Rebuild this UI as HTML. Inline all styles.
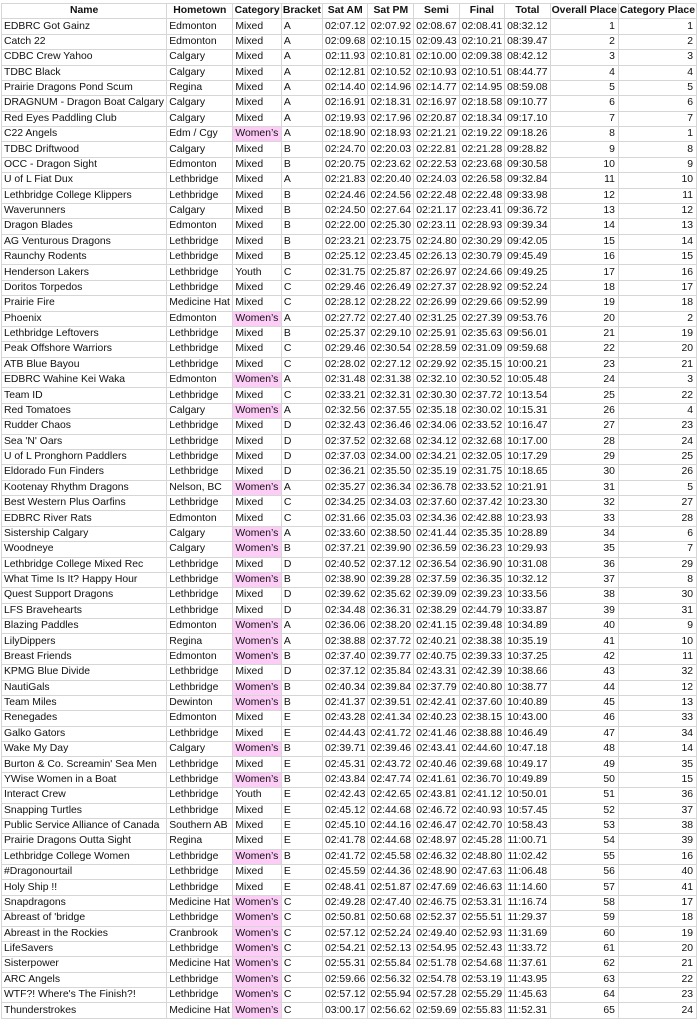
<!DOCTYPE html>
<html><head><meta charset="utf-8"><style>
body{margin:0;background:#fff;width:697px;height:1023px;overflow:hidden;position:relative;font-family:"Liberation Sans",sans-serif;}
table{position:absolute;left:1px;top:3px;border-collapse:collapse;table-layout:fixed;font-size:10.4px;color:#111;}
td{border:1px solid #d6d6d6;padding:0 2px;height:14.38px;line-height:14px;white-space:nowrap;overflow:hidden;}
tr{height:15.38px}
td:nth-child(n+5){text-align:center}
td:nth-child(n+10){text-align:right;padding-right:3px}
tr.h td{font-weight:bold;text-align:center;padding:0 1px}
td.w{background:#fdcdf8}
</style></head><body>
<table>
<colgroup><col style="width:167px"><col style="width:69px"><col style="width:51px"><col style="width:40px"><col style="width:45px"><col style="width:48px"><col style="width:42px"><col style="width:42px"><col style="width:42px"><col style="width:68px"><col style="width:78px"></colgroup>
<tr class="h"><td>Name</td><td>Hometown</td><td>Category</td><td>Bracket</td><td>Sat AM</td><td>Sat PM</td><td>Semi</td><td>Final</td><td>Total</td><td>Overall Place</td><td>Category Place</td></tr>
<tr><td>EDBRC Got Gainz</td><td>Edmonton</td><td>Mixed</td><td>A</td><td>02:07.12</td><td>02:07.92</td><td>02:08.67</td><td>02:08.41</td><td>08:32.12</td><td>1</td><td>1</td></tr>
<tr><td>Catch 22</td><td>Edmonton</td><td>Mixed</td><td>A</td><td>02:09.68</td><td>02:10.15</td><td>02:09.43</td><td>02:10.21</td><td>08:39.47</td><td>2</td><td>2</td></tr>
<tr><td>CDBC Crew Yahoo</td><td>Calgary</td><td>Mixed</td><td>A</td><td>02:11.93</td><td>02:10.81</td><td>02:10.00</td><td>02:09.38</td><td>08:42.12</td><td>3</td><td>3</td></tr>
<tr><td>TDBC Black</td><td>Calgary</td><td>Mixed</td><td>A</td><td>02:12.81</td><td>02:10.52</td><td>02:10.93</td><td>02:10.51</td><td>08:44.77</td><td>4</td><td>4</td></tr>
<tr><td>Prairie Dragons Pond Scum</td><td>Regina</td><td>Mixed</td><td>A</td><td>02:14.40</td><td>02:14.96</td><td>02:14.77</td><td>02:14.95</td><td>08:59.08</td><td>5</td><td>5</td></tr>
<tr><td>DRAGNUM - Dragon Boat Calgary</td><td>Calgary</td><td>Mixed</td><td>A</td><td>02:16.91</td><td>02:18.31</td><td>02:16.97</td><td>02:18.58</td><td>09:10.77</td><td>6</td><td>6</td></tr>
<tr><td>Red Eyes Paddling Club</td><td>Calgary</td><td>Mixed</td><td>A</td><td>02:19.93</td><td>02:17.96</td><td>02:20.87</td><td>02:18.34</td><td>09:17.10</td><td>7</td><td>7</td></tr>
<tr><td>C22 Angels</td><td>Edm / Cgy</td><td class="w">Women’s</td><td>A</td><td>02:18.90</td><td>02:18.93</td><td>02:21.21</td><td>02:19.22</td><td>09:18.26</td><td>8</td><td>1</td></tr>
<tr><td>TDBC Driftwood</td><td>Calgary</td><td>Mixed</td><td>B</td><td>02:24.70</td><td>02:20.03</td><td>02:22.81</td><td>02:21.28</td><td>09:28.82</td><td>9</td><td>8</td></tr>
<tr><td>OCC - Dragon Sight</td><td>Edmonton</td><td>Mixed</td><td>B</td><td>02:20.75</td><td>02:23.62</td><td>02:22.53</td><td>02:23.68</td><td>09:30.58</td><td>10</td><td>9</td></tr>
<tr><td>U of L Fiat Dux</td><td>Lethbridge</td><td>Mixed</td><td>A</td><td>02:21.83</td><td>02:20.40</td><td>02:24.03</td><td>02:26.58</td><td>09:32.84</td><td>11</td><td>10</td></tr>
<tr><td>Lethbridge College Klippers</td><td>Lethbridge</td><td>Mixed</td><td>B</td><td>02:24.46</td><td>02:24.56</td><td>02:22.48</td><td>02:22.48</td><td>09:33.98</td><td>12</td><td>11</td></tr>
<tr><td>Waverunners</td><td>Calgary</td><td>Mixed</td><td>B</td><td>02:24.50</td><td>02:27.64</td><td>02:21.17</td><td>02:23.41</td><td>09:36.72</td><td>13</td><td>12</td></tr>
<tr><td>Dragon Blades</td><td>Edmonton</td><td>Mixed</td><td>B</td><td>02:22.00</td><td>02:25.30</td><td>02:23.11</td><td>02:28.93</td><td>09:39.34</td><td>14</td><td>13</td></tr>
<tr><td>AG Venturous Dragons</td><td>Lethbridge</td><td>Mixed</td><td>B</td><td>02:23.21</td><td>02:23.75</td><td>02:24.80</td><td>02:30.29</td><td>09:42.05</td><td>15</td><td>14</td></tr>
<tr><td>Raunchy Rodents</td><td>Lethbridge</td><td>Mixed</td><td>B</td><td>02:25.12</td><td>02:23.45</td><td>02:26.13</td><td>02:30.79</td><td>09:45.49</td><td>16</td><td>15</td></tr>
<tr><td>Henderson Lakers</td><td>Lethbridge</td><td>Youth</td><td>C</td><td>02:31.75</td><td>02:25.87</td><td>02:26.97</td><td>02:24.66</td><td>09:49.25</td><td>17</td><td>16</td></tr>
<tr><td>Doritos Torpedos</td><td>Lethbridge</td><td>Mixed</td><td>C</td><td>02:29.46</td><td>02:26.49</td><td>02:27.37</td><td>02:28.92</td><td>09:52.24</td><td>18</td><td>17</td></tr>
<tr><td>Prairie Fire</td><td>Medicine Hat</td><td>Mixed</td><td>C</td><td>02:28.12</td><td>02:28.22</td><td>02:26.99</td><td>02:29.66</td><td>09:52.99</td><td>19</td><td>18</td></tr>
<tr><td>Phoenix</td><td>Edmonton</td><td class="w">Women’s</td><td>A</td><td>02:27.72</td><td>02:27.40</td><td>02:31.25</td><td>02:27.39</td><td>09:53.76</td><td>20</td><td>2</td></tr>
<tr><td>Lethbridge Leftovers</td><td>Lethbridge</td><td>Mixed</td><td>B</td><td>02:25.37</td><td>02:29.10</td><td>02:25.91</td><td>02:35.63</td><td>09:56.01</td><td>21</td><td>19</td></tr>
<tr><td>Peak Offshore Warriors</td><td>Lethbridge</td><td>Mixed</td><td>C</td><td>02:29.46</td><td>02:30.54</td><td>02:28.59</td><td>02:31.09</td><td>09:59.68</td><td>22</td><td>20</td></tr>
<tr><td>ATB Blue Bayou</td><td>Lethbridge</td><td>Mixed</td><td>C</td><td>02:28.02</td><td>02:27.12</td><td>02:29.92</td><td>02:35.15</td><td>10:00.21</td><td>23</td><td>21</td></tr>
<tr><td>EDBRC Wahine Kei Waka</td><td>Edmonton</td><td class="w">Women’s</td><td>A</td><td>02:31.48</td><td>02:31.38</td><td>02:32.10</td><td>02:30.52</td><td>10:05.48</td><td>24</td><td>3</td></tr>
<tr><td>Team ID</td><td>Lethbridge</td><td>Mixed</td><td>C</td><td>02:33.21</td><td>02:32.31</td><td>02:30.30</td><td>02:37.72</td><td>10:13.54</td><td>25</td><td>22</td></tr>
<tr><td>Red Tomatoes</td><td>Calgary</td><td class="w">Women’s</td><td>A</td><td>02:32.56</td><td>02:37.55</td><td>02:35.18</td><td>02:30.02</td><td>10:15.31</td><td>26</td><td>4</td></tr>
<tr><td>Rudder Chaos</td><td>Lethbridge</td><td>Mixed</td><td>D</td><td>02:32.43</td><td>02:36.46</td><td>02:34.06</td><td>02:33.52</td><td>10:16.47</td><td>27</td><td>23</td></tr>
<tr><td>Sea 'N' Oars</td><td>Lethbridge</td><td>Mixed</td><td>D</td><td>02:37.52</td><td>02:32.68</td><td>02:34.12</td><td>02:32.68</td><td>10:17.00</td><td>28</td><td>24</td></tr>
<tr><td>U of L Pronghorn Paddlers</td><td>Lethbridge</td><td>Mixed</td><td>D</td><td>02:37.03</td><td>02:34.00</td><td>02:34.21</td><td>02:32.05</td><td>10:17.29</td><td>29</td><td>25</td></tr>
<tr><td>Eldorado Fun Finders</td><td>Lethbridge</td><td>Mixed</td><td>D</td><td>02:36.21</td><td>02:35.50</td><td>02:35.19</td><td>02:31.75</td><td>10:18.65</td><td>30</td><td>26</td></tr>
<tr><td>Kootenay Rhythm Dragons</td><td>Nelson, BC</td><td class="w">Women’s</td><td>A</td><td>02:35.27</td><td>02:36.34</td><td>02:36.78</td><td>02:33.52</td><td>10:21.91</td><td>31</td><td>5</td></tr>
<tr><td>Best Western Plus Oarfins</td><td>Lethbridge</td><td>Mixed</td><td>C</td><td>02:34.25</td><td>02:34.03</td><td>02:37.60</td><td>02:37.42</td><td>10:23.30</td><td>32</td><td>27</td></tr>
<tr><td>EDBRC River Rats</td><td>Edmonton</td><td>Mixed</td><td>C</td><td>02:31.66</td><td>02:35.03</td><td>02:34.36</td><td>02:42.88</td><td>10:23.93</td><td>33</td><td>28</td></tr>
<tr><td>Sistership Calgary</td><td>Calgary</td><td class="w">Women’s</td><td>A</td><td>02:33.60</td><td>02:38.50</td><td>02:41.44</td><td>02:35.35</td><td>10:28.89</td><td>34</td><td>6</td></tr>
<tr><td>Woodneye</td><td>Calgary</td><td class="w">Women’s</td><td>B</td><td>02:37.21</td><td>02:39.90</td><td>02:36.59</td><td>02:36.23</td><td>10:29.93</td><td>35</td><td>7</td></tr>
<tr><td>Lethbridge College Mixed Rec</td><td>Lethbridge</td><td>Mixed</td><td>D</td><td>02:40.52</td><td>02:37.12</td><td>02:36.54</td><td>02:36.90</td><td>10:31.08</td><td>36</td><td>29</td></tr>
<tr><td>What Time Is It? Happy Hour</td><td>Lethbridge</td><td class="w">Women’s</td><td>B</td><td>02:38.90</td><td>02:39.28</td><td>02:37.59</td><td>02:36.35</td><td>10:32.12</td><td>37</td><td>8</td></tr>
<tr><td>Quest Support Dragons</td><td>Lethbridge</td><td>Mixed</td><td>D</td><td>02:39.62</td><td>02:35.62</td><td>02:39.09</td><td>02:39.23</td><td>10:33.56</td><td>38</td><td>30</td></tr>
<tr><td>LFS Bravehearts</td><td>Lethbridge</td><td>Mixed</td><td>D</td><td>02:34.48</td><td>02:36.31</td><td>02:38.29</td><td>02:44.79</td><td>10:33.87</td><td>39</td><td>31</td></tr>
<tr><td>Blazing Paddles</td><td>Edmonton</td><td class="w">Women’s</td><td>A</td><td>02:36.06</td><td>02:38.20</td><td>02:41.15</td><td>02:39.48</td><td>10:34.89</td><td>40</td><td>9</td></tr>
<tr><td>LilyDippers</td><td>Regina</td><td class="w">Women’s</td><td>A</td><td>02:38.88</td><td>02:37.72</td><td>02:40.21</td><td>02:38.38</td><td>10:35.19</td><td>41</td><td>10</td></tr>
<tr><td>Breast Friends</td><td>Edmonton</td><td class="w">Women’s</td><td>B</td><td>02:37.40</td><td>02:39.77</td><td>02:40.75</td><td>02:39.33</td><td>10:37.25</td><td>42</td><td>11</td></tr>
<tr><td>KPMG Blue Divide</td><td>Lethbridge</td><td>Mixed</td><td>D</td><td>02:37.12</td><td>02:35.84</td><td>02:43.31</td><td>02:42.39</td><td>10:38.66</td><td>43</td><td>32</td></tr>
<tr><td>NautiGals</td><td>Lethbridge</td><td class="w">Women’s</td><td>B</td><td>02:40.34</td><td>02:39.84</td><td>02:37.79</td><td>02:40.80</td><td>10:38.77</td><td>44</td><td>12</td></tr>
<tr><td>Team Miles</td><td>Dewinton</td><td class="w">Women’s</td><td>B</td><td>02:41.37</td><td>02:39.51</td><td>02:42.41</td><td>02:37.60</td><td>10:40.89</td><td>45</td><td>13</td></tr>
<tr><td>Renegades</td><td>Edmonton</td><td>Mixed</td><td>E</td><td>02:43.28</td><td>02:41.34</td><td>02:40.23</td><td>02:38.15</td><td>10:43.00</td><td>46</td><td>33</td></tr>
<tr><td>Galko Gators</td><td>Lethbridge</td><td>Mixed</td><td>E</td><td>02:44.43</td><td>02:41.72</td><td>02:41.46</td><td>02:38.88</td><td>10:46.49</td><td>47</td><td>34</td></tr>
<tr><td>Wake My Day</td><td>Calgary</td><td class="w">Women’s</td><td>B</td><td>02:39.71</td><td>02:39.46</td><td>02:43.41</td><td>02:44.60</td><td>10:47.18</td><td>48</td><td>14</td></tr>
<tr><td>Burton &amp; Co. Screamin' Sea Men</td><td>Lethbridge</td><td>Mixed</td><td>E</td><td>02:45.31</td><td>02:43.72</td><td>02:40.46</td><td>02:39.68</td><td>10:49.17</td><td>49</td><td>35</td></tr>
<tr><td>YWise Women in a Boat</td><td>Lethbridge</td><td class="w">Women’s</td><td>B</td><td>02:43.84</td><td>02:47.74</td><td>02:41.61</td><td>02:36.70</td><td>10:49.89</td><td>50</td><td>15</td></tr>
<tr><td>Interact Crew</td><td>Lethbridge</td><td>Youth</td><td>E</td><td>02:42.43</td><td>02:42.65</td><td>02:43.81</td><td>02:41.12</td><td>10:50.01</td><td>51</td><td>36</td></tr>
<tr><td>Snapping Turtles</td><td>Lethbridge</td><td>Mixed</td><td>E</td><td>02:45.12</td><td>02:44.68</td><td>02:46.72</td><td>02:40.93</td><td>10:57.45</td><td>52</td><td>37</td></tr>
<tr><td>Public Service Alliance of Canada</td><td>Southern AB</td><td>Mixed</td><td>E</td><td>02:45.10</td><td>02:44.16</td><td>02:46.47</td><td>02:42.70</td><td>10:58.43</td><td>53</td><td>38</td></tr>
<tr><td>Prairie Dragons Outta Sight</td><td>Regina</td><td>Mixed</td><td>E</td><td>02:41.78</td><td>02:44.68</td><td>02:48.97</td><td>02:45.28</td><td>11:00.71</td><td>54</td><td>39</td></tr>
<tr><td>Lethbridge College Women</td><td>Lethbridge</td><td class="w">Women’s</td><td>B</td><td>02:41.72</td><td>02:45.58</td><td>02:46.32</td><td>02:48.80</td><td>11:02.42</td><td>55</td><td>16</td></tr>
<tr><td>#Dragonourtail</td><td>Lethbridge</td><td>Mixed</td><td>E</td><td>02:45.59</td><td>02:44.36</td><td>02:48.90</td><td>02:47.63</td><td>11:06.48</td><td>56</td><td>40</td></tr>
<tr><td>Holy Ship !!</td><td>Lethbridge</td><td>Mixed</td><td>E</td><td>02:48.41</td><td>02:51.87</td><td>02:47.69</td><td>02:46.63</td><td>11:14.60</td><td>57</td><td>41</td></tr>
<tr><td>Snapdragons</td><td>Medicine Hat</td><td class="w">Women’s</td><td>C</td><td>02:49.28</td><td>02:47.40</td><td>02:46.75</td><td>02:53.31</td><td>11:16.74</td><td>58</td><td>17</td></tr>
<tr><td>Abreast of 'bridge</td><td>Lethbridge</td><td class="w">Women’s</td><td>C</td><td>02:50.81</td><td>02:50.68</td><td>02:52.37</td><td>02:55.51</td><td>11:29.37</td><td>59</td><td>18</td></tr>
<tr><td>Abreast in the Rockies</td><td>Cranbrook</td><td class="w">Women’s</td><td>C</td><td>02:57.12</td><td>02:52.24</td><td>02:49.40</td><td>02:52.93</td><td>11:31.69</td><td>60</td><td>19</td></tr>
<tr><td>LifeSavers</td><td>Lethbridge</td><td class="w">Women’s</td><td>C</td><td>02:54.21</td><td>02:52.13</td><td>02:54.95</td><td>02:52.43</td><td>11:33.72</td><td>61</td><td>20</td></tr>
<tr><td>Sisterpower</td><td>Medicine Hat</td><td class="w">Women’s</td><td>C</td><td>02:55.31</td><td>02:55.84</td><td>02:51.78</td><td>02:54.68</td><td>11:37.61</td><td>62</td><td>21</td></tr>
<tr><td>ARC Angels</td><td>Lethbridge</td><td class="w">Women’s</td><td>C</td><td>02:59.66</td><td>02:56.32</td><td>02:54.78</td><td>02:53.19</td><td>11:43.95</td><td>63</td><td>22</td></tr>
<tr><td>WTF?! Where's The Finish?!</td><td>Lethbridge</td><td class="w">Women’s</td><td>C</td><td>02:57.12</td><td>02:55.94</td><td>02:57.28</td><td>02:55.29</td><td>11:45.63</td><td>64</td><td>23</td></tr>
<tr><td>Thunderstrokes</td><td>Medicine Hat</td><td class="w">Women’s</td><td>C</td><td>03:00.17</td><td>02:56.62</td><td>02:59.69</td><td>02:55.83</td><td>11:52.31</td><td>65</td><td>24</td></tr>
</table>
</body></html>
